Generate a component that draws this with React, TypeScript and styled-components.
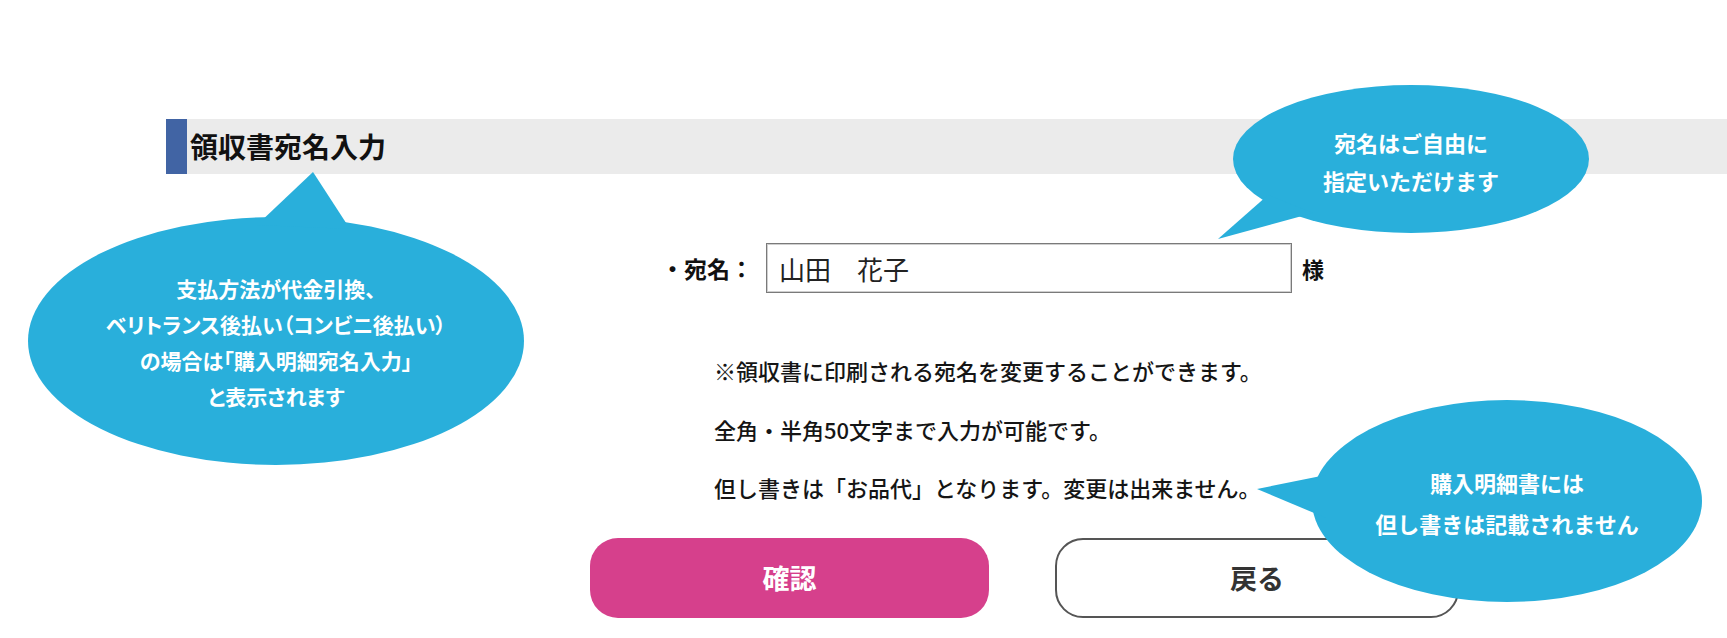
import styled, { createGlobalStyle } from "styled-components";

const GlobalStyle = createGlobalStyle`
  body {
    margin: 0;
    background: #ffffff;
    font-family: "Noto Sans CJK JP", "Noto Sans", sans-serif;
    color: #111111;
  }
`;

const BUBBLE = "#29afdb";

const Page = styled.div`
  position: relative;
  width: 1727px;
  height: 638px;
  overflow: hidden;
  padding: 119px 0 0 166px;
  box-sizing: border-box;
`;

const TitleBar = styled.div`
  display: flex;
  align-items: stretch;
  height: 55px;
  background: #ebebeb;
`;

const Accent = styled.div`
  width: 21px;
  background: #4164a4;
`;

const Title = styled.h2`
  margin: 0 0 0 3px;
  font-size: 28px;
  font-weight: 700;
  line-height: 55px;
  color: #111;
`;

const Form = styled.div`
  display: flex;
  flex-direction: column;
`;

const FieldRow = styled.div`
  display: flex;
  align-items: center;
  margin-top: 69px;
  padding-left: 495px;
`;

const Label = styled.span`
  font-size: 23px;
  font-weight: 700;
  margin-right: 13px;
`;

const NameInput = styled.input`
  width: 526px;
  height: 50px;
  box-sizing: border-box;
  border: 1px solid #7a7a7a;
  box-shadow: inset 0 0 0 1px #cfcfcf;
  padding: 0 12px;
  font-family: "Noto Sans CJK JP", sans-serif;
  font-size: 26px;
  color: #222;
  outline: none;
`;

const Suffix = styled.span`
  margin-left: 10px;
  font-size: 22px;
  font-weight: 700;
`;

const Notes = styled.div`
  margin-top: 48px;
  padding-left: 548px;
`;

const Note = styled.p`
  margin: 0;
  font-size: 22px;
  font-weight: 500;
  line-height: 58.5px;
  color: #151515;
`;

const Buttons = styled.div`
  display: flex;
  gap: 66px;
  margin-top: 21px;
  padding-left: 424px;
`;

const BaseButton = styled.button`
  height: 80px;
  box-sizing: border-box;
  border-radius: 28px;
  font-family: "Noto Sans CJK JP", sans-serif;
  font-size: 27px;
  font-weight: 700;
  cursor: pointer;
`;

const PrimaryButton = styled(BaseButton)`
  width: 399px;
  border: none;
  background: #d6408c;
  color: #fff;
`;

const SecondaryButton = styled(BaseButton)`
  width: 404px;
  border: 2px solid #555;
  background: #fff;
  color: #333;
`;

const CalloutBox = styled.div<{ $x: number; $y: number; $w: number; $h: number }>`
  position: absolute;
  left: ${(p) => p.$x}px;
  top: ${(p) => p.$y}px;
  width: ${(p) => p.$w}px;
  height: ${(p) => p.$h}px;
  display: flex;
  align-items: center;
  justify-content: center;
`;

const CalloutShape = styled.svg`
  position: absolute;
  inset: 0;
  width: 100%;
  height: 100%;
  overflow: visible;
`;

const CalloutText = styled.div<{ $size: number; $lh: number; $palt?: boolean }>`
  position: relative;
  margin-top: ${(p) => p.$lh * 0.08}px;
  text-align: center;
  color: #fff;
  font-weight: 700;
  font-size: ${(p) => p.$size}px;
  line-height: ${(p) => p.$lh}px;
  white-space: nowrap;
  font-feature-settings: ${(p) => (p.$palt ? '"palt"' : "normal")};
`;

type CalloutProps = {
  x: number;
  y: number;
  w: number;
  h: number;
  tail: string;
  size: number;
  lh: number;
  palt?: boolean;
  lines: string[];
};

const Callout = ({ x, y, w, h, tail, size, lh, palt, lines }: CalloutProps) => (
  <CalloutBox $x={x} $y={y} $w={w} $h={h}>
    <CalloutShape viewBox={`0 0 ${w} ${h}`}>
      <ellipse cx={w / 2} cy={h / 2} rx={w / 2} ry={h / 2} fill={BUBBLE} />
      <polygon points={tail} fill={BUBBLE} />
    </CalloutShape>
    <CalloutText $size={size} $lh={lh} $palt={palt}>
      {lines.map((l) => (
        <div key={l}>{l}</div>
      ))}
    </CalloutText>
  </CalloutBox>
);

export default function App() {
  return (
    <>
      <GlobalStyle />
      <Page>
        <TitleBar>
          <Accent />
          <Title>領収書宛名入力</Title>
        </TitleBar>
        <Form>
          <FieldRow>
            <Label>・宛名：</Label>
            <NameInput defaultValue="山田　花子" />
            <Suffix>様</Suffix>
          </FieldRow>
          <Notes>
            <Note>※領収書に印刷される宛名を変更することができます。</Note>
            <Note>全角・半角50文字まで入力が可能です。</Note>
            <Note>但し書きは「お品代」となります。変更は出来ません。</Note>
          </Notes>
          <Buttons>
            <PrimaryButton>確認</PrimaryButton>
            <SecondaryButton>戻る</SecondaryButton>
          </Buttons>
        </Form>

        <Callout
          x={28}
          y={217}
          w={496}
          h={248}
          tail="229,8 285,-45 322,12"
          size={21}
          lh={36}
          palt
          lines={[
            "支払方法が代金引換、",
            "ベリトランス後払い（コンビニ後払い）",
            "の場合は「購入明細宛名入力」",
            "と表示されます",
          ]}
        />
        <Callout
          x={1233}
          y={85}
          w={356}
          h={148}
          tail="35,110 -15,154 80,128"
          size={22}
          lh={38}
          lines={["宛名はご自由に", "指定いただけます"]}
        />
        <Callout
          x={1312}
          y={400}
          w={390}
          h={202}
          tail="14,75 -55,89 14,118"
          size={22}
          lh={41}
          lines={["購入明細書には", "但し書きは記載されません"]}
        />
      </Page>
    </>
  );
}
